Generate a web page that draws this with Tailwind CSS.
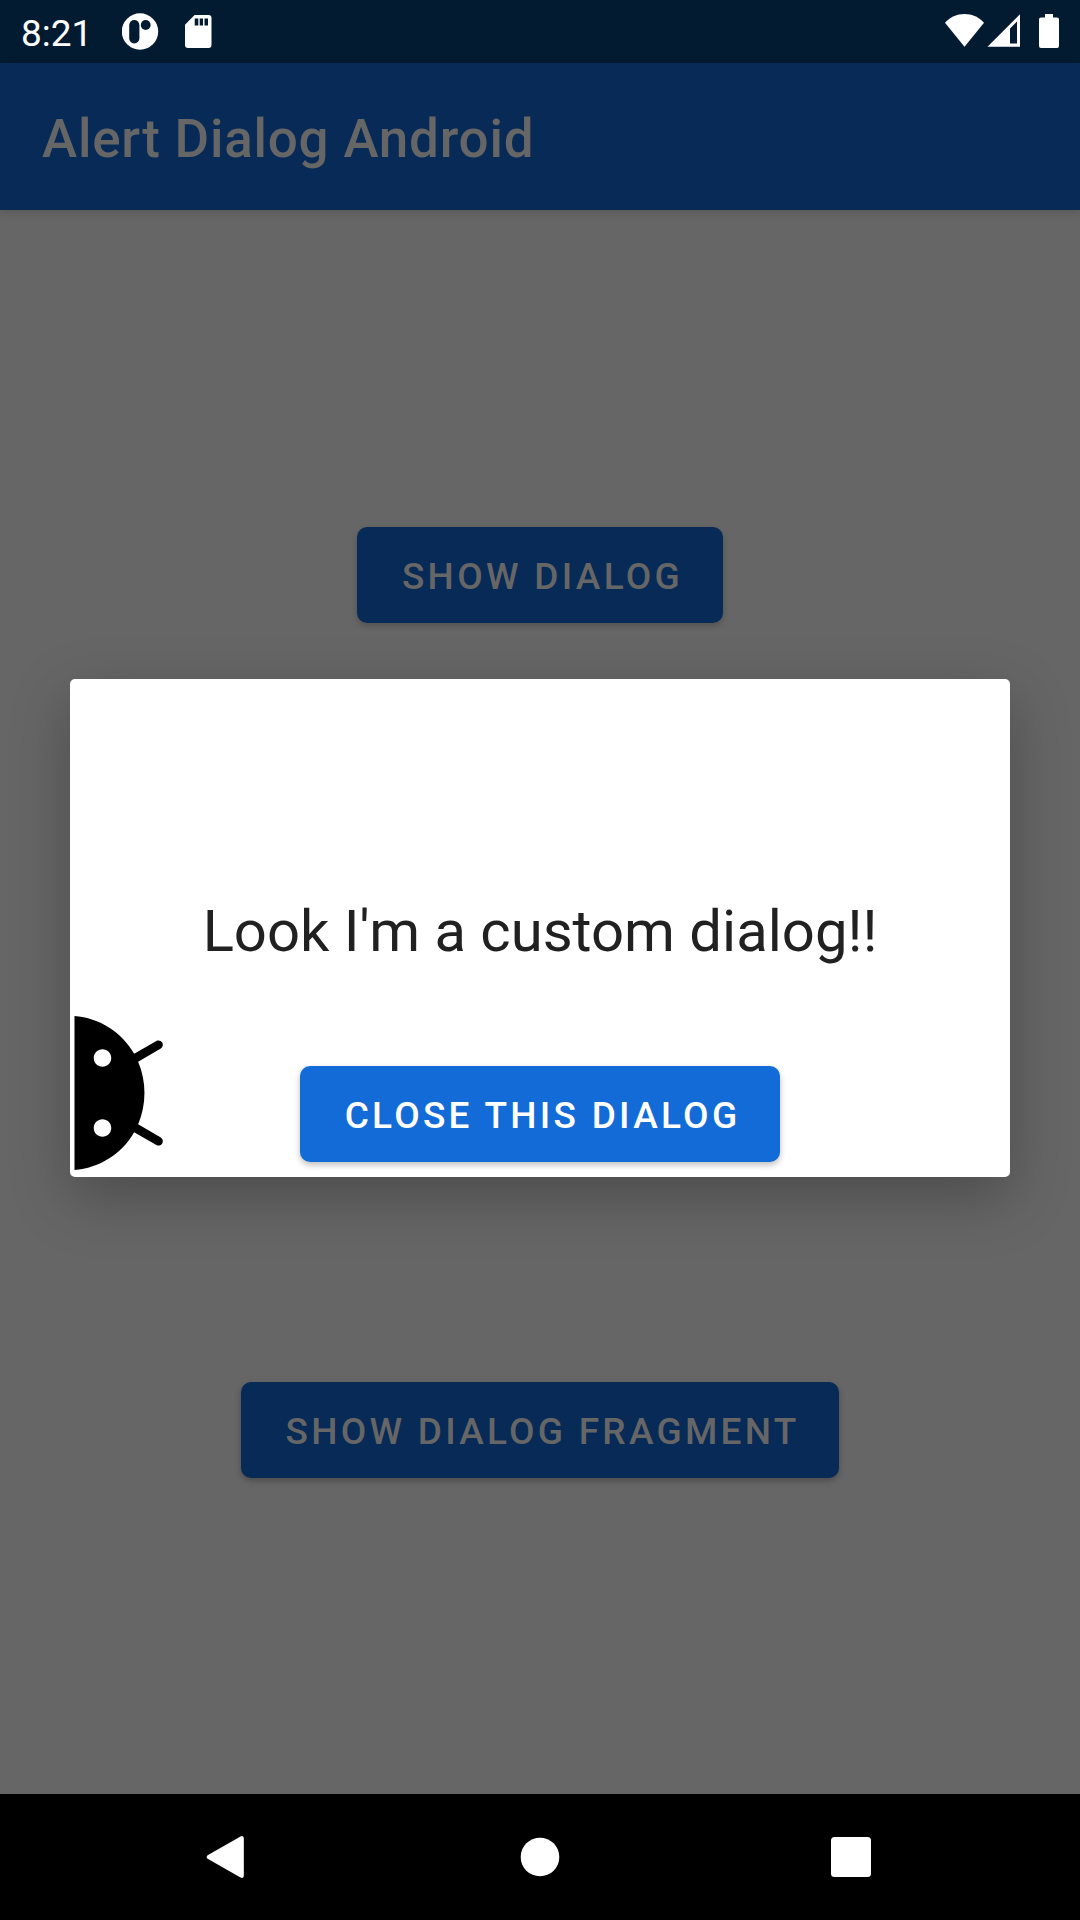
<!DOCTYPE html>
<html lang="en">
<head>
<meta charset="utf-8">
<title>Alert Dialog Android</title>
<script src="https://cdn.jsdelivr.net/npm/@tailwindcss/browser@4"></script>
</head>
<body class="relative flex h-[1920px] w-[1080px] flex-col overflow-hidden bg-[#666666] font-['Roboto',sans-serif]">
  <!-- Status bar -->
  <header class="flex h-[63px] shrink-0 items-center bg-[#031b31] text-white">
    <span class="ml-[21px] w-[101px] pt-[3px] text-[37px] leading-none">8:21</span>
    <svg class="h-[63px] w-[90px]" viewBox="122 0 90 63" fill="#fff">
      <circle cx="140" cy="31.5" r="18.2"/>
      <rect x="129.2" y="20" width="10.2" height="23.4" rx="5.1" fill="#031b31"/>
      <circle cx="145.7" cy="25" r="4.9" fill="#031b31"/>
      <path fill-rule="evenodd" d="M194.6 15H208.500a3 3 0 0 1 3 3V45a3 3 0 0 1-3 3H188a3 3 0 0 1-3-3V24.800zM194.700 18.500v7h3.600v-7zM199.700 18.500v7h3.300v-7zM204.500 18.500v7h3.500v-7z"/>
    </svg>
    <svg class="ml-auto h-[63px] w-[160px]" viewBox="920 0 160 63" fill="#fff">
      <path d="M964.500 46.800 945 22.700C950 17.300 957 14 964.500 14s14.500 3.300 19.500 8.700z"/>
      <path fill-rule="evenodd" d="M1020 14.300V46.800H987.500zM1017 21.500 1010 28.500V43.500H1017z"/>
      <path d="M1045 14h8v3.500h4a2 2 0 0 1 2 2V46a2 2 0 0 1-2 2h-16a2 2 0 0 1-2-2V19.500a2 2 0 0 1 2-2h4z"/>
    </svg>
  </header>
  <!-- App bar -->
  <div class="flex h-[147px] shrink-0 items-center bg-[#082a56] pl-[42px] shadow-[0_2px_8px_rgba(0,0,0,0.15)]">
    <h1 class="pt-[5px] text-[53px] font-medium leading-none tracking-[0.77px] text-[#666666]">Alert Dialog Android</h1>
  </div>
  <main class="flex flex-1 flex-col items-center pt-[317px]">
    <button class="h-[96px] w-[366px] rounded-[10px] bg-[#082a56] pl-[5px] pt-[3px] text-[37px] font-medium tracking-[3.3px] text-[#666666] shadow-[0_3px_6px_rgba(0,0,0,0.2)]">SHOW DIALOG</button>
    <button class="mt-[759px] h-[96px] w-[598px] rounded-[10px] bg-[#082a56] pl-[5px] pt-[3px] text-[37px] font-medium tracking-[3.26px] text-[#666666] shadow-[0_3px_6px_rgba(0,0,0,0.25)]">SHOW DIALOG FRAGMENT</button>
  </main>
  <!-- System navigation -->
  <nav class="flex h-[126px] shrink-0 bg-black">
    <svg class="h-[126px] w-full" viewBox="0 1794 1080 126" fill="#fff">
      <path d="M207.600 1855.200 240.500 1836.400Q243.800 1835 243.800 1838.500V1875.500Q243.800 1879 240.500 1877.600L207.600 1858.800Q205.600 1857 207.600 1855.200z"/>
      <circle cx="540" cy="1857" r="19.300"/>
      <rect x="831" y="1837" width="40" height="40" rx="3.500"/>
    </svg>
  </nav>
  <!-- Modal dialog -->
  <section role="dialog" class="absolute left-[70px] top-[679px] flex h-[498px] w-[940px] flex-col rounded-[5px] bg-white shadow-[0_20px_60px_rgba(0,0,0,0.26)]">
    <p class="mt-[222px] text-center text-[58px] leading-[60px] text-[#212121]">Look I'm a custom dialog!!</p>
    <div class="mt-auto grid h-[168px] grid-cols-[130px_1fr_130px]">
      <svg class="h-[168px] w-[130px]" viewBox="37.500 0 130 168">
        <g transform="translate(168 0) rotate(90) scale(7)">
          <path d="M17.600 9.480l1.840-3.180c.16-.31.04-.69-.26-.85-.29-.15-.65-.06-.83.22l-1.880 3.240c-2.860-1.210-6.080-1.210-8.940 0L5.650 5.670c-.19-.29-.58-.38-.87-.2C4.500 5.650 4.410 6.010 4.560 6.300L6.400 9.480C3.300 11.250 1.280 14.440 1 18h22C22.720 14.440 20.700 11.250 17.600 9.480zM7 15.250c-.69 0-1.250-.56-1.250-1.250S6.310 12.750 7 12.750 8.250 13.310 8.250 14 7.690 15.250 7 15.250zM17 15.250c-.69 0-1.250-.56-1.250-1.250s.56-1.250 1.250-1.250 1.250.56 1.250 1.250S17.690 15.250 17 15.250z"/>
        </g>
      </svg>
      <button class="mt-[57px] h-[96px] w-[480px] justify-self-center rounded-[10px] bg-[#136bd8] pl-[5px] pt-[3px] text-[37px] font-medium tracking-[3.28px] text-white shadow-[0_3px_6px_rgba(0,0,0,0.25)]">CLOSE THIS DIALOG</button>
    </div>
  </section>
</body>
</html>
